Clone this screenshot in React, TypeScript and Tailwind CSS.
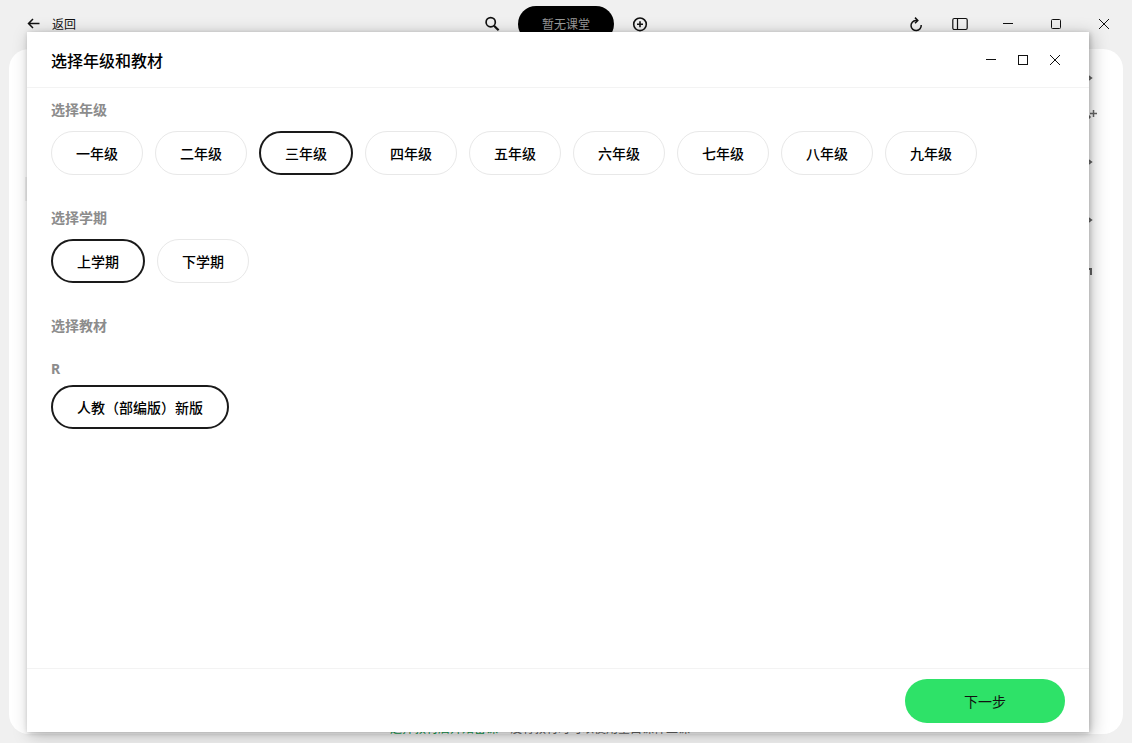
import React, { useState } from "react";

const grades = [
    "一年级",
    "二年级",
    "三年级",
    "四年级",
    "五年级",
    "六年级",
    "七年级",
    "八年级",
    "九年级",
];
const terms = ["上学期", "下学期"];
const books = ["人教（部编版）新版"];

const MinimizeIcon = () => (
    <svg width="16" height="16" viewBox="0 0 16 16" fill="none" stroke="currentColor">
        <path d="M3 7.5h10" />
    </svg>
);

const MaximizeIcon = () => (
    <svg width="16" height="16" viewBox="0 0 16 16" fill="none" stroke="currentColor">
        <rect x="3.5" y="3.5" width="9" height="9" />
    </svg>
);

const RoundMaximizeIcon = () => (
    <svg width="16" height="16" viewBox="0 0 16 16" fill="none" stroke="currentColor">
        <rect x="3.5" y="3.5" width="9" height="9" rx="1" />
    </svg>
);

const CloseIcon = () => (
    <svg width="16" height="16" viewBox="0 0 16 16" fill="none" stroke="currentColor">
        <path d="M3 3l10 10M13 3L3 13" />
    </svg>
);

type ChipGroupProps = {
    label: string;
    options: string[];
    value: string;
    onChange: (value: string) => void;
};

const ChipGroup = ({ label, options, value, onChange }: ChipGroupProps) => (
    <div role="group" aria-label={label} className="flex flex-wrap gap-3">
        {options.map((option) => (
            <button
                key={option}
                type="button"
                aria-pressed={option === value}
                onClick={() => onChange(option)}
                className={
                    option === value
                        ? "h-11 px-6 rounded-full border-2 border-[#1a1a1a] text-sm font-medium text-black"
                        : "h-11 px-6 rounded-full border border-[#e8e8e8] text-sm font-medium text-black"
                }
            >
                {option}
            </button>
        ))}
    </div>
);

const TopBar = () => (
    <header className="h-12 shrink-0 grid grid-cols-[1fr_auto_1fr] items-center">
        <button type="button" className="justify-self-start flex items-center gap-2.5 pl-[26px] text-xs">
            <svg width="16" height="16" viewBox="0 0 16 16" fill="none" stroke="currentColor" strokeWidth="1.5">
                <path d="M13.5 7.5h-11M7 3L2.5 7.5L7 12" />
            </svg>
            返回
        </button>

        <div className="flex items-center gap-3">
            <button type="button" aria-label="搜索" className="w-7 flex justify-center">
                <svg width="16" height="16" viewBox="0 0 16 16" fill="none" stroke="currentColor" strokeWidth="1.7">
                    <circle cx="6.7" cy="6.2" r="4.6" />
                    <path d="M10 9.7l4.6 4.6" strokeWidth="2.2" />
                </svg>
            </button>
            <button type="button" className="h-9 px-6 rounded-full bg-black text-xs text-[#999]">
                暂无课堂
            </button>
            <button type="button" aria-label="添加" className="w-7 flex justify-center">
                <svg width="16" height="16" viewBox="0 0 16 16" fill="none" stroke="currentColor" strokeWidth="1.6">
                    <circle cx="8" cy="8.3" r="6.3" />
                    <path d="M8 5.3v6M5 8.3h6" />
                </svg>
            </button>
        </div>

        <div className="justify-self-end flex items-center pr-1">
            <button type="button" aria-label="刷新" className="w-10 flex justify-center">
                <svg width="16" height="16" viewBox="0 0 16 16" fill="none" stroke="currentColor" strokeWidth="1.5">
                    <path d="M9 4.4H7.8A5.1 5.1 0 1 0 13.2 9" />
                    <path d="M7 1.6L9.8 4.4L7 7.2" />
                </svg>
            </button>
            <button type="button" aria-label="侧栏" className="w-12 flex justify-center">
                <svg width="16" height="16" viewBox="0 0 16 16" fill="none" stroke="currentColor" strokeWidth="1.2">
                    <rect x="0.8" y="2.5" width="14.4" height="11" rx="1.5" />
                    <path d="M5.5 2.5v11" />
                </svg>
            </button>
            <button type="button" aria-label="最小化" className="w-12 flex justify-center">
                <MinimizeIcon />
            </button>
            <button type="button" aria-label="最大化" className="w-12 flex justify-center">
                <RoundMaximizeIcon />
            </button>
            <button type="button" aria-label="关闭" className="w-12 flex justify-center">
                <CloseIcon />
            </button>
        </div>
    </header>
);

const App = () => {
    const [grade, setGrade] = useState("三年级");
    const [term, setTerm] = useState("上学期");
    const [book, setBook] = useState("人教（部编版）新版");

    return (
        <div className="relative h-screen min-h-[560px] flex flex-col overflow-hidden bg-[#f0f0f0] text-[#111] font-['Noto_Sans_CJK_SC',sans-serif]">
            <TopBar />

            {/* Workspace behind the dialog */}
            <main className="flex-1 mt-px mx-[9px] mb-[9px] rounded-[20px] bg-white flex overflow-hidden">
                <div className="w-5 h-6 mt-32 ml-4 bg-[#f0f0f0]" />
                <div className="flex-1 flex items-end justify-center gap-3 pr-12 text-xs leading-3">
                    <span className="text-[#12a150]">选择教材后开始备课</span>
                    <span className="text-[#666]">没有教材时可以使用空白课件上课</span>
                </div>
                <div className="w-10 pt-5 flex flex-col items-start text-[#666]">
                    <svg width="16" height="500" viewBox="0 0 16 500" fill="none" stroke="currentColor" strokeWidth="2">
                        <path d="M4 6l4 3L4 12M4 90l4 3L4 96M4 148l4 3L4 154" />
                        <path d="M10.5 41v7M7 44.5h7M4 45l3 3L4 51" strokeWidth="1.5" />
                        <path d="M3 200h5v6" />
                        <circle cx="-1" cy="484" r="7" fill="#8fb4e0" stroke="none" />
                    </svg>
                </div>
            </main>

            {/* Dialog */}
            <section
                role="dialog"
                aria-label="选择年级和教材"
                className="absolute top-8 right-[43px] bottom-[11px] left-[27px] flex flex-col bg-white shadow-[3px_3px_16px_rgba(0,0,0,0.25),1px_1px_5px_rgba(0,0,0,0.2)]"
            >
                <div className="h-14 shrink-0 flex items-center justify-between pl-6 pr-[18px] border-b border-[#f3f3f3]">
                    <h2 className="text-base font-medium text-black">选择年级和教材</h2>
                    <div className="flex">
                        <button type="button" aria-label="最小化" className="w-8 flex justify-center">
                            <MinimizeIcon />
                        </button>
                        <button type="button" aria-label="最大化" className="w-8 flex justify-center">
                            <MaximizeIcon />
                        </button>
                        <button type="button" aria-label="关闭" className="w-8 flex justify-center">
                            <CloseIcon />
                        </button>
                    </div>
                </div>

                <div className="flex-1 overflow-auto px-6 pt-[11px]">
                    <h3 className="mb-3 text-sm font-bold text-[#8c8c8c]">选择年级</h3>
                    <ChipGroup label="选择年级" options={grades} value={grade} onChange={setGrade} />

                    <h3 className="mt-8 mb-3 text-sm font-bold text-[#8c8c8c]">选择学期</h3>
                    <ChipGroup label="选择学期" options={terms} value={term} onChange={setTerm} />

                    <h3 className="mt-8 mb-6 text-sm font-bold text-[#8c8c8c]">选择教材</h3>
                    <h4 className="mb-1.5 text-sm font-['Noto_Sans',sans-serif] font-bold text-[#8c8c8c]">R</h4>
                    <ChipGroup label="选择教材" options={books} value={book} onChange={setBook} />
                </div>

                <div className="h-16 shrink-0 flex items-center justify-end px-6 border-t border-[#f3f3f3]">
                    <button type="button" className="w-40 h-11 rounded-full bg-[#2ee268] text-sm">
                        下一步
                    </button>
                </div>
            </section>
        </div>
    );
};

export default App;
